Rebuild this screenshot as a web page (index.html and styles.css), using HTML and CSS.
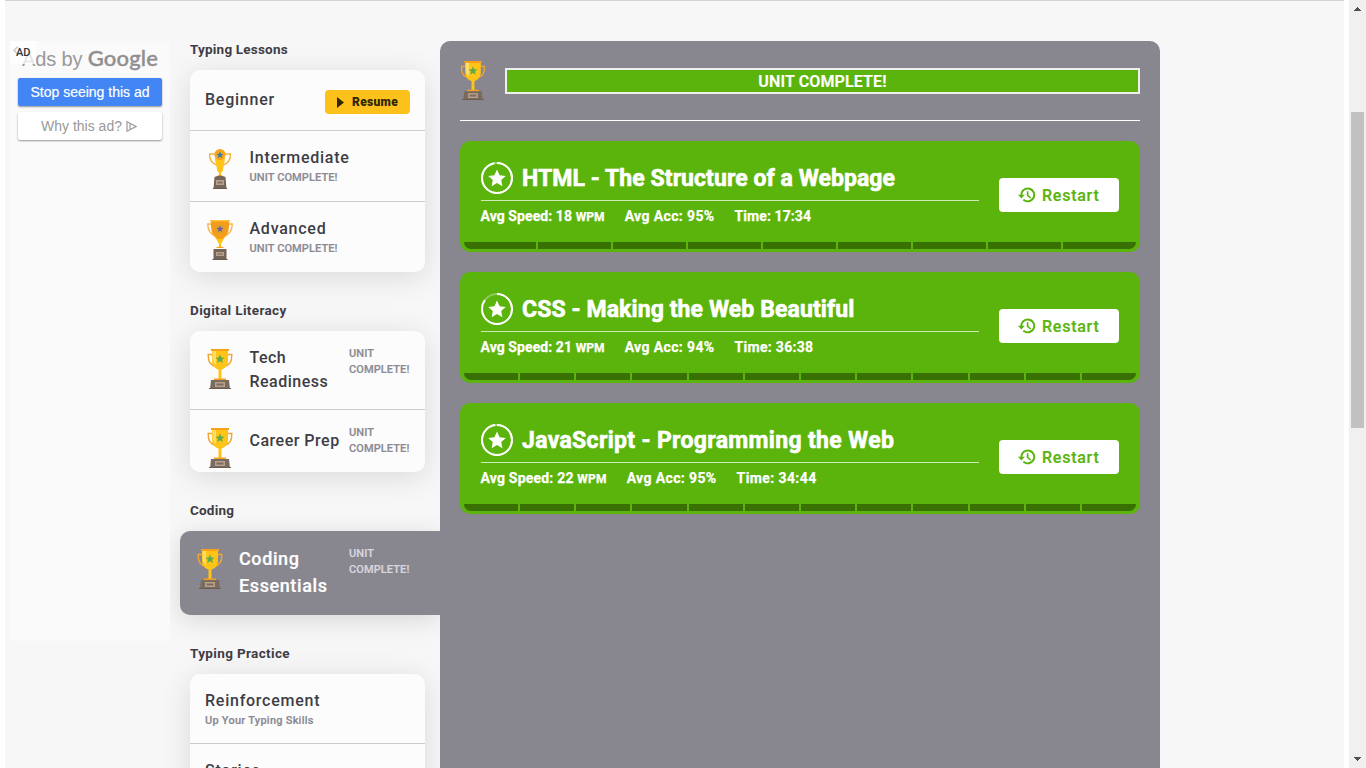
FILE: index.html
```html
<!DOCTYPE html>
<html lang="en">
<head>
<meta charset="utf-8">
<title>Typing Lessons</title>
<link rel="stylesheet" href="styles.css">
</head>
<body>
<svg class="defs" width="0" height="0" aria-hidden="true">
  <symbol id="cup" viewBox="0 0 26 40">
    <path d="M5 5.500H1.200C1 12 3 16.500 8.500 17M21 5.500h3.800C25 12 23 16.500 17.500 17" fill="none" stroke="#f3a52d" stroke-width="1.400"/>
    <path d="M5 1h16v11c0 5-4 8-6.500 8.600V30h-3v-9.400C9 20 5 17 5 12z" fill="#fec418"/>
    <path d="M5.500 2H9v14C6.500 14 5.500 12 5.500 9z" fill="#fedc69"/>
    <path d="M4 0h18v2H4zM7 29.500h12V31H7z" fill="#f6a11a"/>
    <path d="m13 5.500 1.300 2.900 3.200.3-2.400 2.100.7 3.200L13 12.300 10.200 14l.7-3.200-2.400-2.100 3.200-.3z" fill="#5faa4b"/>
    <path d="M4 31h18l1 9H3z" fill="#796b5d"/><path d="M2 39h22v1H2z" fill="#6a5c50"/>
    <path d="M8 33h10v5H8z" fill="#b7a18c"/><path d="M9.500 34.500h7v2h-7z" fill="#806b5c"/>
  </symbol>
  <symbol id="cup-slim" viewBox="0 0 26 40">
    <path d="M9 5H2.700C2 10 5 15 10 16M17 5h6.300C24 10 21 15 16 16" fill="none" stroke="#f7b23d" stroke-width="1.400"/>
    <path d="M8 5h10c.5 8-2 12-2 16.500L14 24v3h-2v-3l-2-2.500C10 17 7.500 13 8 5z" fill="#fec418"/>
    <circle cx="13" cy="5.500" r="5.500" fill="#f7a61b"/>
    <path d="m13 2.500 1 2.200 2.500.2-1.900 1.700.6 2.400-2.200-1.300L10.800 9l.6-2.400-1.900-1.700 2.500-.2z" fill="#367fa9"/>
    <path d="m10 27 3-1.500L16 27z" fill="#f6a11a"/><path d="M7.500 28q5.500-2.500 11 0l1 12h-13z" fill="#756657"/>
    <path d="M6 39h14v1H6z" fill="#65584d"/><path d="M9 31h8v5H9z" fill="#b7a18c"/><path d="M10.500 32.500h5v2h-5z" fill="#897665"/>
  </symbol>
  <symbol id="cup-wide" viewBox="0 0 26 40">
    <path d="M5 4H.8C.5 10 4 15 9 16M21 4h4.200C25.500 10 22 15 17 16" fill="none" stroke="#f7b23d" stroke-width="1.300"/>
    <path d="M4 0h18v5c0 9-3 11-6 14l-2 4v5h-2v-5l-2-4C7 16 4 14 4 5z" fill="#f69c18"/>
    <path d="m8 17 3 2h4l3-2-4 7v4h-2v-4z" fill="#fec418"/><path d="M3 0h20v1.500H3z" fill="#fec23e"/>
    <circle cx="13" cy="9" r="4.800" fill="#d9a329"/>
    <path d="m13 5.500 1 2.300 2.500.2-1.900 1.700.6 2.400-2.200-1.300-2.200 1.300.6-2.400L9.500 8l2.500-.2z" fill="#7b59a1"/>
    <path d="M8 28q5-3 10 0z" fill="#f6a11a"/><path d="M6.500 29h13v11h-13z" fill="#756657"/><path d="M5.500 39h15v1h-15z" fill="#65584d"/>
    <path d="M9 32h8v4H9z" fill="#b7a18c"/><path d="M10.500 33.200h5v1.500h-5z" fill="#897665"/>
  </symbol>
  <symbol id="star" viewBox="0 0 32 32">
    <path d="m16 7.500 2.600 5.700 6.200.7-4.600 4.200 1.200 6.100-5.400-3.100-5.400 3.100 1.200-6.100-4.600-4.200 6.200-.7z" fill="#fff"/>
  </symbol>
  <symbol id="history" viewBox="0 0 24 24">
    <path fill="currentColor" d="M13 2a9.800 9.800 0 0 0-9.800 9.500H0l4.500 5.300L9 11.500H5.700A7.300 7.300 0 1 1 8 17.200l-1.800 1.900A9.900 9.900 0 1 0 13 2zm-1.300 5v6l4.500 3.800 1.400-1.600-3.700-3.300V7z"/>
  </symbol>
</svg>

<div class="window">
  <div class="page">
    <aside class="ad">
      <span class="ad-tag"><svg width="6" height="9" viewBox="0 0 6 9"><path d="M5 .5 1 4.500l4 4" fill="none" stroke="#ccc" stroke-width="1.500"/></svg>AD</span>
      <div class="ad-brand">Ads by <b>Google</b></div>
      <div class="ad-stop">Stop seeing this ad</div>
      <div class="ad-why">Why this ad? <svg width="11" height="11" viewBox="0 0 11 11"><path d="M1 .8v9.400L10 5.500zM4 3v5" fill="none" stroke="#999" stroke-width="1.200"/></svg></div>
    </aside>

    <nav class="sidebar">
      <section>
        <h2>Typing Lessons</h2>
        <div class="card">
          <div class="row beginner"><span class="name">Beginner</span><span class="resume"><svg width="7" height="11"><path d="M0 0v11l7-5.500z" fill="#2f2607"/></svg>Resume</span></div>
          <div class="row lesson"><svg class="cup"><use href="#cup-slim"/></svg><div><div class="name">Intermediate</div><div class="note">UNIT COMPLETE!</div></div></div>
          <div class="row lesson"><svg class="cup"><use href="#cup-wide"/></svg><div><div class="name">Advanced</div><div class="note">UNIT COMPLETE!</div></div></div>
        </div>
      </section>
      <section>
        <h2 class="digital">Digital Literacy</h2>
        <div class="card">
          <div class="row unit"><svg class="cup"><use href="#cup"/></svg><div class="name">Tech Readiness</div><div class="note">UNIT COMPLETE!</div></div>
          <div class="row unit career"><svg class="cup"><use href="#cup"/></svg><div class="name">Career Prep</div><div class="note">UNIT COMPLETE!</div></div>
        </div>
      </section>
      <section>
        <h2>Coding</h2>
        <div class="active"><svg class="cup"><use href="#cup"/></svg><div class="name">Coding Essentials</div><div class="note">UNIT COMPLETE!</div></div>
      </section>
      <section>
        <h2 class="typing-practice">Typing Practice</h2>
        <div class="card">
          <div class="row practice"><div class="name">Reinforcement</div><div class="note">Up Your Typing Skills</div></div>
          <div class="row practice"><div class="name">Stories</div></div>
        </div>
      </section>
    </nav>

    <main class="main">
      <header class="unit-head"><svg class="cup"><use href="#cup"/></svg><div class="unit-bar">UNIT COMPLETE!</div></header>

      <article class="lesson-card html">
        <div class="body">
          <div class="info">
            <div class="title"><svg width="32" height="32" viewBox="0 0 32 32"><circle cx="16" cy="16" r="15" fill="none" stroke="#9cd276" stroke-width="2"/><circle cx="16" cy="16" r="15" fill="none" stroke="#fff" stroke-width="2" pathLength="100" stroke-dasharray="97 3" transform="rotate(-90 16 16)"/><use href="#star"/></svg><h3>HTML - The Structure of a Webpage</h3></div>
            <div class="stats"><span>Avg Speed: 18 <small>WPM</small></span><span class="acc">Avg Acc: 95%</span><span class="time">Time: 17:34</span></div>
          </div>
          <div class="restart"><svg width="18" height="18"><use href="#history"/></svg>Restart</div>
        </div>
        <div class="segments"><i></i><i></i><i></i><i></i><i></i><i></i><i></i><i></i><i></i></div>
      </article>

      <article class="lesson-card css">
        <div class="body">
          <div class="info">
            <div class="title"><svg width="32" height="32" viewBox="0 0 32 32"><circle cx="16" cy="16" r="15" fill="none" stroke="#8bcb5b" stroke-width="2"/><circle cx="16" cy="16" r="15" fill="none" stroke="#fff" stroke-width="2" pathLength="100" stroke-dasharray="85 15" transform="rotate(-90 16 16)"/><use href="#star"/></svg><h3>CSS - Making the Web Beautiful</h3></div>
            <div class="stats"><span>Avg Speed: 21 <small>WPM</small></span><span class="acc">Avg Acc: 94%</span><span class="time">Time: 36:38</span></div>
          </div>
          <div class="restart"><svg width="18" height="18"><use href="#history"/></svg>Restart</div>
        </div>
        <div class="segments"><i></i><i></i><i></i><i></i><i></i><i></i><i></i><i></i><i></i><i></i><i></i><i></i></div>
      </article>

      <article class="lesson-card js">
        <div class="body">
          <div class="info">
            <div class="title"><svg width="32" height="32" viewBox="0 0 32 32"><circle cx="16" cy="16" r="15" fill="none" stroke="#9cd276" stroke-width="2"/><circle cx="16" cy="16" r="15" fill="none" stroke="#fff" stroke-width="2" pathLength="100" stroke-dasharray="98 2" transform="rotate(-90 16 16)"/><use href="#star"/></svg><h3>JavaScript - Programming the Web</h3></div>
            <div class="stats"><span>Avg Speed: 22 <small>WPM</small></span><span class="acc">Avg Acc: 95%</span><span class="time">Time: 34:44</span></div>
          </div>
          <div class="restart"><svg width="18" height="18"><use href="#history"/></svg>Restart</div>
        </div>
        <div class="segments"><i></i><i></i><i></i><i></i><i></i><i></i><i></i><i></i><i></i><i></i><i></i><i></i></div>
      </article>
    </main>
  </div>
  <div class="scrollbar">
    <svg width="7" height="4"><path d="M3 0h1v1h1v1h1v1h1v1H0V3h1V2h1V1h1z" fill="#505050"/></svg>
    <div class="thumb"></div>
    <svg class="down" width="7" height="4"><path d="M0 0h7v1H6v1H5v1H4v1H3V3H2V2H1V1H0z" fill="#505050"/></svg>
  </div>
</div>
</body>
</html>
```
FILE: styles.css
```css
* { box-sizing: border-box; }
body { margin: 0; height: 768px; overflow: hidden; background: #fff; color: #3e3d45; font-family: Roboto, "Liberation Sans", sans-serif; }
svg { display: block; flex: none; }
.defs { position: absolute; }
h2, h3 { margin: 0; }
.window { display: flex; height: 768px; padding-left: 5px; gap: 5px; }
.page { display: flex; width: 1339px; height: 768px; padding: 40px 0 0 5px; border-top: 1px solid #d3d3d3; background: #f7f7f7; overflow: hidden; }

.ad { position: relative; width: 160px; height: 600px; padding: 4px 8px; background: #fafafa; font-family: "Liberation Sans", Arial, sans-serif; flex: none; }
.ad-tag { position: absolute; left: 0; top: 0; display: flex; width: 26px; height: 23px; padding: 3px 0 0 3px; background: rgba(255,255,255,.75); color: #333; font: 500 11px/18px Roboto, sans-serif; }
.ad-tag svg { margin: 2px -3px 0 0; }
.ad-brand { height: 33px; padding-left: 4px; color: #999; font-size: 20px; line-height: 26px; letter-spacing: -.15px; white-space: nowrap; }
.ad-brand b { font-family: Lato, sans-serif; font-size: 22px; font-weight: 500; letter-spacing: .2px; color: #8f8f8f; -webkit-text-stroke: .4px #8f8f8f; }
.ad-stop, .ad-why { display: flex; align-items: center; justify-content: center; height: 28px; border-radius: 2px; box-shadow: 0 1px 2px rgba(0,0,0,.4); font-size: 14px; white-space: nowrap; }
.ad-stop { background: #4285f4; color: #fff; -webkit-text-stroke: .2px #fff; }
.ad-why { gap: 4px; margin-top: 6px; padding-right: 2px; background: #fff; color: #999; }

.sidebar { width: 260px; margin-left: 10px; flex: none; }
.sidebar section { margin-bottom: 30px; }
.sidebar h2 { margin: 0 10px 12px; font-size: 13.500px; line-height: 17px; font-weight: 700; letter-spacing: .2px; }
.sidebar .digital, .sidebar .typing-practice { letter-spacing: .36px; }
.card { margin: 0 15px 0 10px; overflow: hidden; border-radius: 10px; background: #fcfcfc; box-shadow: 0 5px 30px rgba(0,0,0,.12); }
.row { display: flex; padding: 0 15px; }
.row + .row { border-top: 1px solid #ccc; }
.name { font-size: 16px; line-height: 24px; font-weight: 500; letter-spacing: .75px; }
.note { color: #8b8a93; font-size: 11px; line-height: 16px; font-weight: 500; letter-spacing: .1px; -webkit-text-stroke: .2px currentColor; }
.cup { width: 26px; height: 40px; }
.beginner { height: 60px; align-items: center; justify-content: space-between; }
.resume { display: flex; align-items: center; justify-content: center; gap: 8px; width: 85px; height: 24px; margin-top: 4px; border-radius: 4px; background: #fcc21b; color: #2f2607; font-size: 12px; font-weight: 900; letter-spacing: .3px; }
.lesson { height: 71px; padding: 15px 17px 0; gap: 16.500px; }
.lesson .cup { margin-top: 3px; }
.unit { height: 78px; padding: 14px 15px 0 17px; }
.unit .cup { margin-top: 4px; }
.unit .name { width: 99px; padding: 1px 0 0 16.500px; margin-right: 17px; letter-spacing: .48px; }
.unit .note { width: 62px; padding-top: 1px; }
.unit .name, .active .name { flex: none; }
.career { height: 63px; }
.career .name { width: 116px; margin-right: 0; padding-top: 5px; letter-spacing: .5px; white-space: nowrap; }
.active { display: flex; height: 84px; padding: 14px 0 0 17px; border-radius: 10px 0 0 10px; background: #888790; color: #fff; box-shadow: 0 5px 26px rgba(0,0,0,.13); }
.active .cup { margin-top: 4px; }
.active .name { width: 126px; padding-left: 16px; padding-right: 20px; font-size: 18px; line-height: 27px; letter-spacing: .6px; -webkit-text-stroke: .2px #fff; }
.active .note { width: 62px; padding-top: 1px; color: #d8d7df; }
.practice { display: block; height: 69px; padding-top: 15px; }
.practice .note { letter-spacing: .25px; }

.main { width: 720px; height: 760px; padding: 20px; border-radius: 10px 10px 0 0; background: #888790; flex: none; }
.unit-head { display: flex; justify-content: space-between; height: 60px; margin-bottom: 20px; border-bottom: 1px solid #fff; }
.unit-head .cup { height: 39px; }
.unit-bar { width: 635px; height: 26px; margin-top: 7px; border: 2px solid #eee; background: #5bb40b; color: #fff; font-size: 16px; line-height: 23px; font-weight: 600; letter-spacing: .15px; text-align: center; -webkit-text-stroke: .2px #fff; }
.lesson-card { height: 111px; margin-bottom: 20px; padding: 21px 4px 0; border-radius: 10px; background: #5bb40b; color: #fff; }
.body { display: flex; gap: 20px; height: 80px; padding: 0 17px; }
.info { width: 498px; }
.title { display: flex; align-items: center; gap: 9px; height: 39px; padding-bottom: 6px; border-bottom: 1px solid #ceeab6; }
h3 { padding-top: 1px; font-size: 23px; line-height: 30px; font-weight: 700; white-space: nowrap; -webkit-text-stroke: .6px #fff; }
.html h3 { letter-spacing: .06px; }
.css h3 { letter-spacing: .1px; }
.js h3 { letter-spacing: .33px; }
.stats { display: flex; gap: 20px; margin: 7px 0 0 -.5px; font-size: 14px; line-height: 17px; font-weight: 700; letter-spacing: .08px; -webkit-text-stroke: .25px #fff; }
.stats small { font-size: 12px; }
.acc { letter-spacing: .38px; }
.css .time { letter-spacing: .3px; }
.js .stats { letter-spacing: .2px; }
.js .acc { letter-spacing: .38px; }
.js .time { letter-spacing: .4px; }
.restart { display: flex; align-items: center; gap: 6px; width: 120px; height: 34px; margin-top: 16px; padding-left: 19px; border-radius: 4px; background: #fff; color: #5bb40b; font-size: 16px; font-weight: 500; letter-spacing: .75px; -webkit-text-stroke: .2px currentColor; }
.segments { display: flex; gap: 2px; height: 7px; overflow: hidden; border-radius: 0 0 7px 7px; }
.segments i { flex: 1; background: #387003; }
.segments i:first-child { flex: 0 0 54px; }
.html .segments i:first-child { flex-basis: 72px; }

.scrollbar { display: flex; flex-direction: column; align-items: center; width: 17px; height: 768px; padding-top: 7px; background: #f0f0f0; }
.thumb { width: 13px; height: 316px; margin-top: 101px; background: #c1c1c1; }
.down { margin: auto 0 7px; }
```
